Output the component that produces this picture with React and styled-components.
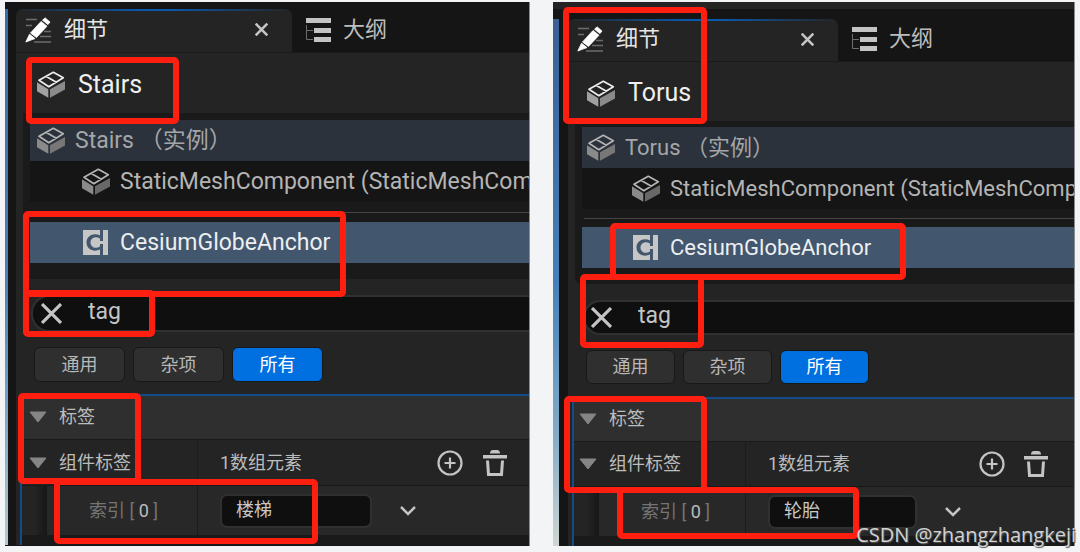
import React from "react";
import styled, { createGlobalStyle, ThemeProvider } from "styled-components";

const GlobalStyle = createGlobalStyle`
  * { box-sizing: border-box; }
  body {
    margin: 0;
    background: #f3f4f6;
    font-family: Roboto, "Noto Sans CJK SC", sans-serif;
  }
  button, input { font-family: inherit; }
`;

const stairs = {
  name: "Stairs",
  tag: "楼梯",
  topBar: "#151515",
  topBarHeight: 0,
  topGap: 7,
  strip: 3,
  gutter: 8,
  stripColors: "#3a6aa5, #4a80b8 50%, #8fb4cc 85%, #b8c8cc",
  tabWidth: 276,
  tabHeight: 43,
  headerHeight: 61,
  inset: 7,
  treeGap: 7,
  rowHeight: 41,
  splitHeight: 20,
  treeEnd: 16,
  searchGap: 16,
  searchHeight: 37,
  filterTop: 15,
  filterWidth: 91,
  filterHeight: 35,
  filterBottom: 12,
  categoryHeight: 43,
  propHeight: 47,
  itemHeight: 49,
  nameWidth: 176,
  inputWidth: 152,
  actionsRight: 22,
  actionsGap: 20,
  treeSize: 23,
  marks: [
    [21, 55, 153, 67],
    [18, 209, 323, 86],
    [18, 288, 132, 47],
    [13, 391, 123, 91],
    [49, 477, 264, 65],
  ],
};

const torus = {
  ...stairs,
  name: "Torus",
  tag: "轮胎",
  topBar: "#242424",
  topBarHeight: 7,
  topGap: 10,
  strip: 6,
  gutter: 9,
  stripColors: "#3a6096, #4680b8 50%, #86aec8 80%, #d0d6d2",
  tabWidth: 270,
  tabHeight: 42,
  headerHeight: 60,
  inset: 5,
  treeGap: 6,
  splitHeight: 18,
  searchHeight: 35,
  filterWidth: 89,
  filterHeight: 34,
  filterBottom: 13,
  categoryHeight: 42,
  propHeight: 46,
  nameWidth: 172,
  inputWidth: 149,
  actionsRight: 26,
  actionsGap: 19,
  treeSize: 22,
  marks: [
    [10, 5, 144, 117],
    [57, 221, 296, 57],
    [27, 272, 124, 74],
    [11, 394, 143, 97],
    [64, 485, 242, 52],
  ],
};

const Page = styled.main`
  position: relative;
  display: grid;
  grid-template-columns: 525fr 522fr;
  gap: 23px;
  padding: 2px 5px 7px;
`;

const Panel = styled.section`
  position: relative;
  min-width: 0;
  background: #151515;
  border-right: 1px solid #8c8c8c;
  overflow: hidden;
`;

const TopBar = styled.div`
  height: ${({ theme }) => theme.topBarHeight}px;
  background: ${({ theme }) => theme.topBar};
`;

const Frame = styled.div`
  display: flex;
  margin-top: ${({ theme }) => theme.topGap}px;
`;

const Strip = styled.div`
  flex: none;
  width: ${({ theme }) => theme.strip}px;
  margin-right: ${({ theme }) => theme.gutter}px;
  background: linear-gradient(${({ theme }) => theme.stripColors});
`;

const Body = styled.div`
  flex: 1;
  min-width: 0;
  background: #242424;
`;

const Tabs = styled.div`
  display: flex;
  height: ${({ theme }) => theme.tabHeight}px;
  background: #151515;
`;

const Tab = styled.div`
  display: flex;
  align-items: center;
  width: ${({ theme, $active }) => ($active ? `${theme.tabWidth}px` : "auto")};
  padding: 0 24px 2px ${({ $active }) => ($active ? 9 : 13)}px;
  border-radius: 7px 7px 0 0;
  color: ${({ $active }) => ($active ? "#e6e6e6" : "#bdbdbd")};
  font-size: 22px;
  line-height: 30px;
  background: ${({ $active }) =>
    $active
      ? "linear-gradient(90deg, #24242400, #0a59b0 45%, #0a59b0 55%, #24242400) top / 100% 2px no-repeat, #242424"
      : "transparent"};
`;

const TabLabel = styled.span`
  flex: 1;
  margin-left: 12px;
`;

const IconButton = styled.button`
  display: flex;
  padding: 0;
  border: 0;
  background: none;
  color: #c4c4c4;
`;

const Header = styled.h1`
  display: flex;
  align-items: center;
  gap: 13px;
  height: ${({ theme }) => theme.headerHeight}px;
  margin: 0;
  padding: 3px 0 0 ${({ theme }) => theme.inset + 14}px;
  border-top: 1px solid #1a1a1a;
  color: #f0f0f0;
  font-size: 25px;
  font-weight: 400;
  line-height: 30px;
`;

const Tree = styled.div`
  margin-left: 7px;
  padding: ${({ theme }) => theme.treeGap}px 0 ${({ theme }) => theme.treeEnd}px 7px;
  background: #1a1a1a;
  border-radius: 0 0 0 6px;
`;

const TreeRow = styled.div`
  display: flex;
  align-items: center;
  gap: ${({ $tone }) => ($tone === "selected" ? 12 : 10)}px;
  height: ${({ theme }) => theme.rowHeight}px;
  padding-left: ${({ theme, $tone }) =>
    theme.inset + ({ root: 0, child: 45, selected: 46 })[$tone]}px;
  overflow: hidden;
  background: ${({ $tone }) =>
    ({ root: "#2b323b", child: "#151515", selected: "#42566e" })[$tone]};
  color: ${({ $tone }) =>
    ({ root: "#a4a6a9", child: "#b4b4b4", selected: "#eceef0" })[$tone]};
  font-size: ${({ theme }) => theme.treeSize}px;
  line-height: 30px;
  white-space: nowrap;

  svg { flex: none; }
`;

const Split = styled.div`
  display: flex;
  align-items: center;
  height: ${({ theme }) => theme.splitHeight}px;
  padding-left: 2px;

  &::before {
    content: "";
    flex: 1;
    height: 1px;
    background: #454545;
  }
`;

const Search = styled.label`
  display: flex;
  align-items: center;
  gap: 26px;
  height: ${({ theme }) => theme.searchHeight}px;
  margin: ${({ theme }) => theme.searchGap}px 0 0 15px;
  padding-left: ${({ theme }) => theme.inset + 1}px;
  border: 2px solid #303030;
  border-right: 0;
  border-radius: 18px 0 0 18px;
  background: #0f0f0f;
`;

const SearchInput = styled.input`
  flex: 1;
  min-width: 0;
  height: 30px;
  padding: 0 0 4px;
  border: 0;
  outline: 0;
  background: none;
  color: #c4c4c4;
  font-size: 23px;
`;

const Filters = styled.div`
  display: flex;
  gap: 8px;
  padding: ${({ theme }) => theme.filterTop}px 0 ${({ theme }) => theme.filterBottom}px 18px;
`;

const Filter = styled.button`
  width: ${({ theme }) => theme.filterWidth}px;
  height: ${({ theme }) => theme.filterHeight}px;
  padding: 0;
  border: 1px solid #181818;
  border-radius: 6px;
  background: ${({ $on }) => ($on ? "#0070e0" : "#2f2f2f")};
  color: ${({ $on }) => ($on ? "#ffffff" : "#b8b8b8")};
  font-size: 18px;
  line-height: 24px;
`;

const Details = styled.div`
  margin-left: 4px;
  padding-bottom: 10px;
  border-top: 2px solid #124c8a;
  border-left: 2px solid #124c8a;
  background: #1a1a1a;
  color: #bcbcbc;
  font-size: 18px;
  line-height: 24px;
`;

const Category = styled.h2`
  display: flex;
  align-items: center;
  gap: 12px;
  height: ${({ theme }) => theme.categoryHeight}px;
  margin: 0;
  padding: 0 0 2px ${({ theme }) => theme.inset}px;
  background: #2f2f2f;
  font-size: 18px;
  font-weight: 400;
`;

const Property = styled.div`
  display: flex;
  height: ${({ theme, $item }) => ($item ? theme.itemHeight : theme.propHeight)}px;
  border-top: ${({ $item }) => ($item ? 0 : 1)}px solid #1a1a1a;
  border-bottom: ${({ $item }) => ($item ? 0 : 1)}px solid #1a1a1a;
  background: ${({ $item }) => ($item ? "#282828" : "#242424")};
`;

const NameCell = styled.div`
  display: flex;
  align-items: center;
  gap: 12px;
  width: ${({ theme }) => theme.nameWidth}px;
  padding-left: ${({ theme, $item }) => ($item ? 0 : theme.inset)}px;
  border-right: 1px solid #1c1c1c;
`;

const Indent = styled.div`
  align-self: stretch;
  width: 25px;
  margin-right: 30px;
  background: linear-gradient(90deg, #242424 50%, #171717);
`;

const ItemLabel = styled.label`
  color: #747474;
  white-space: pre;
`;

const ItemIndex = styled.span`
  color: #bcbcbc;
`;

const ValueCell = styled.div`
  display: flex;
  flex: 1;
  align-items: center;
  min-width: 0;
  padding: 0 ${({ theme }) => theme.actionsRight}px 0 22px;
`;

const Count = styled.span`
  flex: 1;
`;

const Actions = styled.div`
  display: flex;
  gap: ${({ theme }) => theme.actionsGap}px;
`;

const TagInput = styled.input`
  width: ${({ theme }) => theme.inputWidth}px;
  height: 34px;
  margin-right: 27px;
  padding: 0 14px 6px;
  border: 2px solid #303030;
  border-radius: 7px;
  outline: 0;
  background: #0f0f0f;
  color: #c8c8c8;
  font-size: 18px;
`;

const Mark = styled.div`
  position: absolute;
  left: ${({ $box }) => $box[0]}px;
  top: ${({ $box }) => $box[1]}px;
  width: ${({ $box }) => $box[2]}px;
  height: ${({ $box }) => $box[3]}px;
  border: 6px solid #ff1f10;
  border-radius: 5px;
  pointer-events: none;
`;

const Watermark = styled.div`
  position: absolute;
  right: 4px;
  bottom: 4px;
  color: #d2d2d2;
  font-family: "Open Sans", sans-serif;
  font-size: 20px;
  line-height: 28px;
  text-shadow: 1px 1px 1px #555;
`;

const PenIcon = () => (
  <svg width="27" height="26" viewBox="0 0 27 26">
    <path d="M1 2.500h11M1 8.500h6M19 14.500h7M15 19.500h11M9 25h17" stroke="#6c6c6c" strokeWidth="1.500" />
    <path d="M20 .8 25 5 23 7.600 17.500 3.300zM16 4.500 22 9.200 11.500 20.500 5.500 16zM4.500 17.200 10 21.600 .8 25z" fill="#fff" stroke="#fff" strokeWidth=".8" strokeLinejoin="round" />
  </svg>
);

const OutlineIcon = () => (
  <svg width="26" height="26" viewBox="0 0 26 26">
    <path d="M1 1h25v5H1zM9 11h17v5H9zM9 20h17v5H9z" fill="#c4c4c4" />
    <path d="M1.500 8v14.500H8M1.500 13.500H8" stroke="#6c6c6c" fill="none" />
  </svg>
);

const Cross = ({ size, weight }) => (
  <svg width={size} height={size} viewBox="0 0 20 20">
    <path d="M1 1 19 19M19 1 1 19" stroke="currentColor" strokeWidth={weight} />
  </svg>
);

const CubeIcon = ({ line = "#b4b4b4", left = "#8a8a8a", right = "#777" }) => (
  <svg width="28" height="27" viewBox="0 0 28 27">
    <path d="M16.300 1.300 26.300 6.800 11.800 15.700 2 9.300zM9 5.300 19.300 11.300" fill="none" stroke={line} strokeWidth="1.700" strokeLinejoin="round" />
    <path d="M0 11.300 11.300 18.300v8.500L0 20.300z" fill={left} />
    <path d="M13 18.300 28 10v8.500L13 26.800z" fill={right} />
  </svg>
);

const CesiumIcon = () => (
  <svg width="25" height="25" viewBox="0 0 25 25">
    <path d="M0 0h17v5.500C11 2.500 3.500 5.500 3.500 12.500S11 22.500 17 19.500V25H0z" fill="#c6c6c6" />
    <path d="M17 8.500C12.500 5.500 7.500 8 7.500 12.500S12.500 19.500 17 16.500V14h3v11h5V0h-5v11h-3z" fill="#c6c6c6" />
  </svg>
);

const Caret = () => (
  <svg width="18" height="12" viewBox="0 0 18 12">
    <path d="M1 1h16L9 11z" fill="#858585" stroke="#858585" strokeLinejoin="round" />
  </svg>
);

const PlusIcon = () => (
  <svg width="26" height="26" viewBox="0 0 26 26" fill="none" stroke="#c4c4c4">
    <circle cx="13" cy="13" r="11.500" strokeWidth="2.200" />
    <path d="M13 7.500v11M7.500 13h11" strokeWidth="2.200" />
  </svg>
);

const TrashIcon = () => (
  <svg width="24" height="26" viewBox="0 0 24 26">
    <path d="M7 3.500Q7 0 10 0h4q3 0 3 3.500zM0 5h24v3.500H0z" fill="#c4c4c4" />
    <path d="M4.500 10.500 5.500 24.500h13l1-14" fill="none" stroke="#c4c4c4" strokeWidth="3" />
  </svg>
);

const ChevronIcon = () => (
  <svg width="18" height="12" viewBox="0 0 18 12">
    <path d="M2 2 9 9l7-7" fill="none" stroke="#c4c4c4" strokeWidth="2.500" />
  </svg>
);

function DetailsPanel({ metrics }) {
  const fieldId = `tag-${metrics.name}`;
  return (
    <ThemeProvider theme={metrics}>
      <Panel>
        <TopBar />
        <Frame>
          <Strip />
          <Body>
            <Tabs>
              <Tab $active>
                <PenIcon />
                <TabLabel>细节</TabLabel>
                <IconButton aria-label="关闭"><Cross size={13} weight={4} /></IconButton>
              </Tab>
              <Tab>
                <OutlineIcon />
                <TabLabel>大纲</TabLabel>
              </Tab>
            </Tabs>
            <Header>
              <CubeIcon line="#eeeeee" left="#a0a0a0" right="#8a8a8a" />
              {metrics.name}
            </Header>
            <Tree>
              <TreeRow $tone="root"><CubeIcon />{metrics.name} （实例）</TreeRow>
              <TreeRow $tone="child">
                <CubeIcon right="#686868" />StaticMeshComponent (StaticMeshComponent0)
              </TreeRow>
              <Split />
              <TreeRow $tone="selected"><CesiumIcon />CesiumGlobeAnchor</TreeRow>
            </Tree>
            <Search>
              <IconButton type="button" aria-label="清除"><Cross size={21} weight={3} /></IconButton>
              <SearchInput aria-label="搜索" defaultValue="tag" />
            </Search>
            <Filters>
              <Filter>通用</Filter>
              <Filter>杂项</Filter>
              <Filter $on>所有</Filter>
            </Filters>
            <Details>
              <Category><Caret />标签</Category>
              <Property>
                <NameCell><Caret />组件标签</NameCell>
                <ValueCell>
                  <Count>1数组元素</Count>
                  <Actions>
                    <IconButton aria-label="添加"><PlusIcon /></IconButton>
                    <IconButton aria-label="删除"><TrashIcon /></IconButton>
                  </Actions>
                </ValueCell>
              </Property>
              <Property $item>
                <NameCell $item>
                  <Indent />
                  <ItemLabel htmlFor={fieldId}>索引 [ <ItemIndex>0</ItemIndex> ]</ItemLabel>
                </NameCell>
                <ValueCell>
                  <TagInput id={fieldId} defaultValue={metrics.tag} />
                  <IconButton aria-label="展开"><ChevronIcon /></IconButton>
                </ValueCell>
              </Property>
            </Details>
          </Body>
        </Frame>
        {metrics.marks.map((box) => <Mark key={box.join()} $box={box} />)}
      </Panel>
    </ThemeProvider>
  );
}

export default function App() {
  return (
    <>
      <GlobalStyle />
      <Page>
        <DetailsPanel metrics={stairs} />
        <DetailsPanel metrics={torus} />
        <Watermark>CSDN @zhangzhangkeji</Watermark>
      </Page>
    </>
  );
}
